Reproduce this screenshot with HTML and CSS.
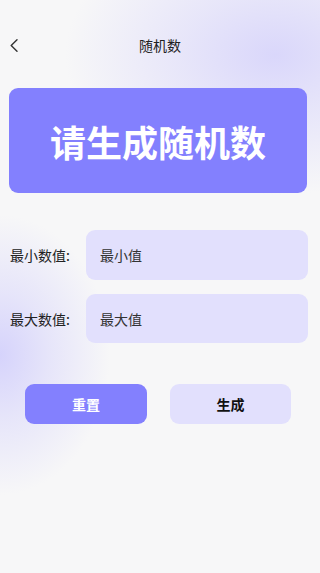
FILE: index.html
```html
<!DOCTYPE html>
<html lang="zh">
<head>
<meta charset="utf-8">
<title>随机数</title>
<link rel="stylesheet" href="styles.css">
</head>
<body>
<div class="screen">
  <header class="topbar">
    <span class="back">
      <svg width="8" height="13" viewBox="0 0 8 13"><polyline points="7,0.8 1.2,6.5 7,12.2" fill="none" stroke="#333" stroke-width="1.4" stroke-linecap="round" stroke-linejoin="round"/></svg>
    </span>
    <h1 class="title">随机数</h1>
    <span></span>
  </header>
  <section class="banner">请生成随机数</section>
  <div class="form">
    <div class="row">
      <label class="label">最小数值:</label>
      <div class="field">最小值</div>
    </div>
    <div class="row row2">
      <label class="label">最大数值:</label>
      <div class="field">最大值</div>
    </div>
  </div>
  <div class="actions">
    <button class="btn btn-reset">重置</button>
    <button class="btn btn-gen">生成</button>
  </div>
</div>
</body>
</html>
```
FILE: styles.css
```css
html, body {
  margin: 0;
  padding: 0;
}
body {
  width: 320px;
  height: 573px;
  overflow: hidden;
  font-family: "Noto Sans CJK SC", "Noto Sans", sans-serif;
  background: #f7f7f8;
}
.screen {
  width: 320px;
  height: 573px;
  box-sizing: border-box;
  background:
    radial-gradient(ellipse 210px 140px at 275px 55px, rgba(216, 213, 251, 0.95), rgba(216, 213, 251, 0.5) 45%, rgba(216, 213, 251, 0) 100%),
    radial-gradient(ellipse 110px 140px at 0px 355px, rgba(210, 207, 252, 0.9), rgba(210, 207, 252, 0.45) 45%, rgba(210, 207, 252, 0) 100%),
    #f7f7f8;
  display: flex;
  flex-direction: column;
}
.topbar {
  margin-top: 30px;
  height: 30px;
  display: grid;
  grid-template-columns: 1fr auto 1fr;
  align-items: center;
  padding: 0 10px;
}
.back {
  display: flex;
  align-items: center;
}
.back svg { display: block; }
.title {
  margin: 0;
  font-size: 14px;
  font-weight: 400;
  color: #222;
  line-height: 30px;
}
.banner {
  margin: 28px 13px 0 9px;
  height: 105px;
  border-radius: 9px;
  background: #8380fe;
  color: #fff;
  font-size: 36px;
  font-weight: 700;
  display: flex;
  align-items: center;
  justify-content: center;
}
.form {
  margin-top: 37px;
  display: flex;
  flex-direction: column;
  gap: 14px;
  padding: 0 12px 0 10px;
}
.row {
  display: flex;
  align-items: center;
  height: 50px;
}
.row2 { height: 49px; }
.label {
  width: 76px;
  font-size: 14px;
  color: #222;
}
.field {
  flex: 1;
  height: 100%;
  border-radius: 9px;
  background: #e2e0fd;
  display: flex;
  align-items: center;
  padding-left: 14px;
  font-size: 14px;
  color: #333;
}
.actions {
  margin-top: 41px;
  display: flex;
  gap: 23px;
  padding-left: 25px;
}
.btn {
  height: 40px;
  border: none;
  border-radius: 9px;
  font-family: inherit;
  font-size: 14px;
  font-weight: 700;
  padding: 0;
}
.btn-reset {
  width: 122px;
  background: #8380fe;
  color: #fff;
}
.btn-gen {
  width: 121px;
  background: #e2e0fd;
  color: #111;
}
```
